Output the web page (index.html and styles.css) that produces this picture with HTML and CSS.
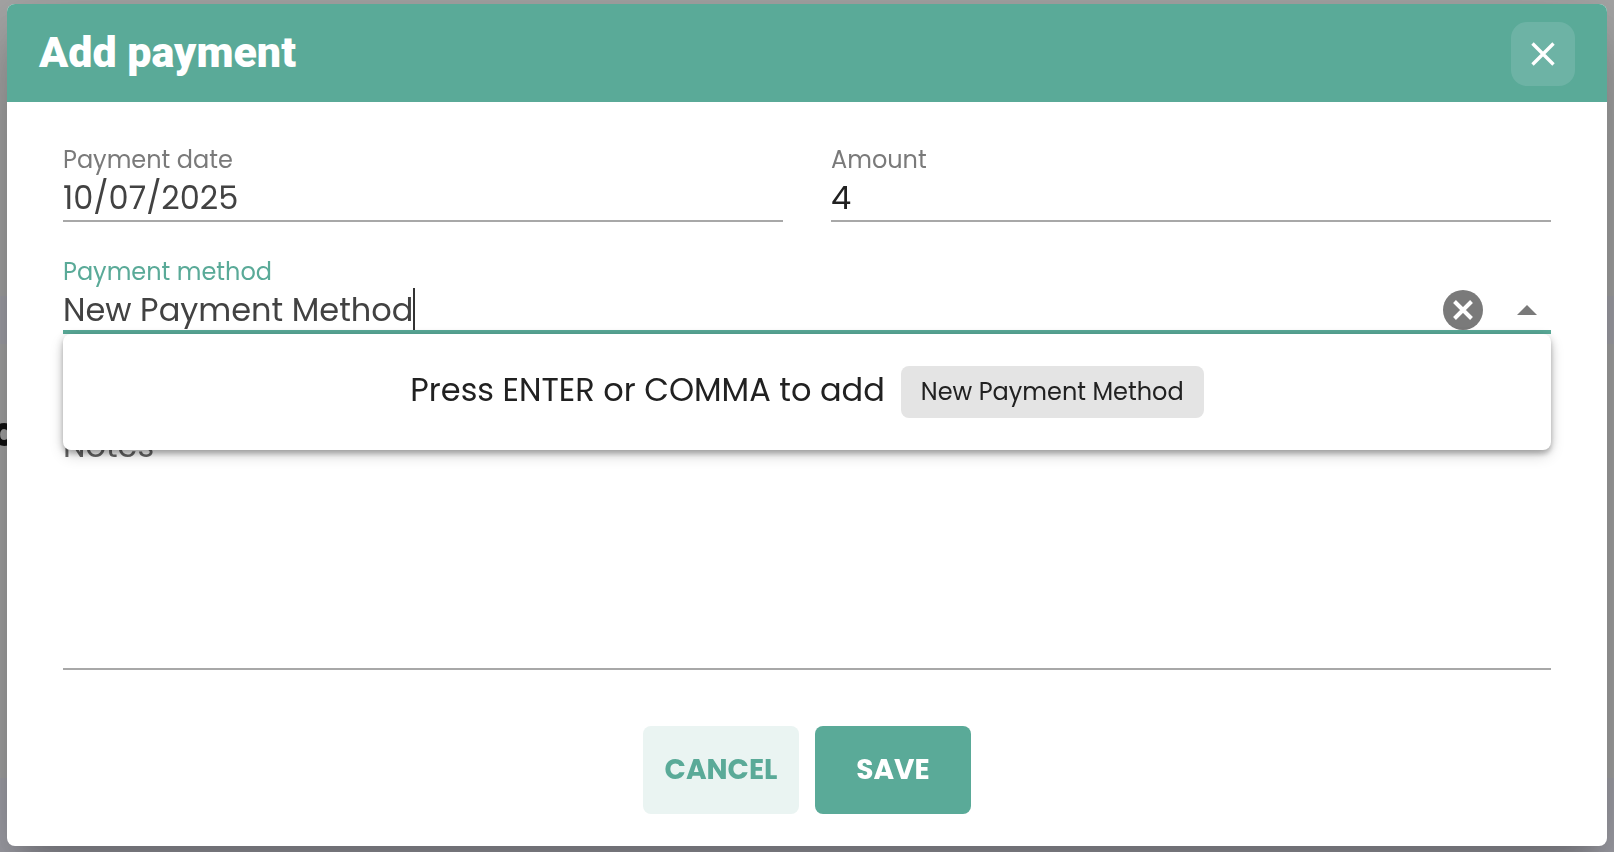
FILE: index.html
```html
<!DOCTYPE html>
<html lang="en">
<head>
<meta charset="utf-8">
<title>Add payment</title>
<link rel="stylesheet" href="styles.css">
</head>
<body>
<div class="page-behind"><span class="page-text">c</span></div>
<form class="dialog" role="dialog" aria-labelledby="dialog-title">
  <header class="dialog-header">
    <h1 class="dialog-title" id="dialog-title">Add payment</h1>
    <button class="close" type="button" aria-label="Close">
      <svg width="24" height="24" viewBox="0 0 24 24" fill="none" stroke="currentColor" stroke-width="3.4"><path d="M1.500 1.500 22.500 22.500M22.500 1.500 1.500 22.500"/></svg>
    </button>
  </header>
  <div class="dialog-body">
    <div class="row">
      <div class="field">
        <label class="label" for="date">Payment date</label>
        <div class="control"><input class="input" id="date" type="text" value="10/07/2025"></div>
      </div>
      <div class="field">
        <label class="label" for="amount">Amount</label>
        <div class="control"><input class="input input-strong" id="amount" type="text" value="4"></div>
      </div>
    </div>
    <div class="field field-active">
      <label class="label" for="method">Payment method</label>
      <div class="control">
        <input class="input input-typed" id="method" type="text" value="New Payment Method">
        <span class="caret"></span>
        <button class="icon-button clear" type="button" aria-label="Clear">
          <svg width="40" height="40" viewBox="0 0 40 40"><circle cx="20" cy="20" r="20" fill="currentColor"/><path d="M11.5 11.5 28.500 28.5M28.500 11.5 11.5 28.5" stroke="#fff" stroke-width="4"/></svg>
        </button>
        <button class="icon-button" type="button" aria-label="Close list">
          <svg width="20" height="10" viewBox="0 0 20 10"><path d="M0 10 10 0 20 10z" fill="currentColor"/></svg>
        </button>
      </div>
      <div class="menu">
        <span>Press ENTER or COMMA to add</span>
        <span class="chip">New Payment Method</span>
      </div>
    </div>
    <div class="field field-notes">
      <label class="notes-label" for="notes">Notes</label>
      <textarea class="notes" id="notes"></textarea>
    </div>
    <div class="actions">
      <button class="button button-light" type="button">CANCEL</button>
      <button class="button" type="submit">SAVE</button>
    </div>
  </div>
</form>
</body>
</html>
```
FILE: styles.css
```css
* { box-sizing: border-box; }
body {
  margin: 0;
  min-height: 100vh;
  padding: 4px 7px 6px;
  overflow: hidden;
  font-family: Poppins, Inter, sans-serif;
  font-size: 32px;
  color: #212121;
}
.page-behind {
  position: fixed;
  inset: 0;
  z-index: -1;
  background: linear-gradient(#a6a6a6 296px, #a3a3ab 296px 344px, #a6a6a6 344px 778px, #a3a3ab 778px);
}
.page-text {
  position: absolute;
  left: -8px;
  top: 404px;
  font-size: 40px;
  font-weight: 700;
  line-height: 56px;
  color: #111;
}
.dialog {
  display: flex;
  flex-direction: column;
  min-height: calc(100vh - 10px);
  border-radius: 8px;
  background: #fff;
  box-shadow: 0 22px 30px -14px rgba(0,0,0,.2), 0 48px 76px 6px rgba(0,0,0,.14), 0 18px 92px 16px rgba(0,0,0,.12);
}
.dialog-header {
  display: flex;
  align-items: center;
  justify-content: space-between;
  padding: 18px 32px 16px;
  border-radius: 8px 8px 0 0;
  background: #5aaa98;
  color: #fff;
}
.dialog-title {
  margin: 0;
  padding-bottom: 4px;
  font-family: Roboto, sans-serif;
  font-size: 43px;
  font-weight: 900;
  line-height: 48px;
}
button { border: 0; font: inherit; cursor: pointer; }
.close {
  display: grid;
  place-items: center;
  width: 64px;
  height: 64px;
  padding: 0;
  border-radius: 16px;
  background: #6db3a5;
  color: #fff;
}
.dialog-body {
  display: flex;
  flex-direction: column;
  flex: 1;
  gap: 36px;
  padding: 44px 56px 32px;
}
.row { display: grid; grid-template-columns: 1fr 1fr; gap: 48px; }
.field { position: relative; display: flex; flex-direction: column; }
.label { padding-bottom: 2px; font-size: 24px; line-height: 28px; color: #7a7a7a; }
.control { display: flex; align-items: flex-start; height: 46px; border-bottom: 2px solid #a8a8a8; }
.input {
  flex: 1;
  min-width: 0;
  height: 44px;
  padding: 0;
  border: 0;
  outline: 0;
  background: none;
  font: inherit;
  color: #424242;
}
.input-strong { color: #212121; }
.input-typed { flex: none; field-sizing: content; caret-color: transparent; }
.field-active .label { color: #5aaa98; }
.field-active .control { border-bottom: 4px solid #5aaa98; }
.caret { width: 2px; height: 42px; background: #333; }
.icon-button { display: grid; place-items: center; align-self: flex-end; width: 48px; height: 40px; padding: 0; background: none; color: #7a7a7a; }
.clear { width: 40px; margin-left: auto; margin-right: 20px; }
.menu {
  position: absolute;
  z-index: 1;
  top: 100%;
  left: 0;
  right: 0;
  display: flex;
  align-items: flex-start;
  justify-content: center;
  gap: 16px;
  padding: 32px;
  border-radius: 8px;
  background: #fff;
  box-shadow: 0 2px 10px rgba(0,0,0,.2), 0 4px 4px rgba(0,0,0,.14), 0 6px 16px -2px rgba(0,0,0,.2);
  line-height: 48px;
}
.chip { padding: 8px 20px; border-radius: 8px; background: #e4e4e4; font-size: 24px; line-height: 36px; }
.field-notes { flex: 1; padding-top: 52px; }
.notes-label { line-height: 48px; color: #666; }
.notes {
  flex: 1;
  min-height: 120px;
  border: 0;
  border-bottom: 2px solid #a8a8a8;
  outline: 0;
  resize: none;
  background: none;
  font: inherit;
}
.actions { display: flex; justify-content: center; gap: 16px; padding-top: 20px; }
.button {
  min-width: 156px;
  height: 88px;
  padding: 0 20px;
  border-radius: 8px;
  background: #5aaa98;
  color: #fff;
  font-size: 28px;
  font-weight: 700;
}
.button-light { background: #eaf4f2; color: #5aaa98; }
```
